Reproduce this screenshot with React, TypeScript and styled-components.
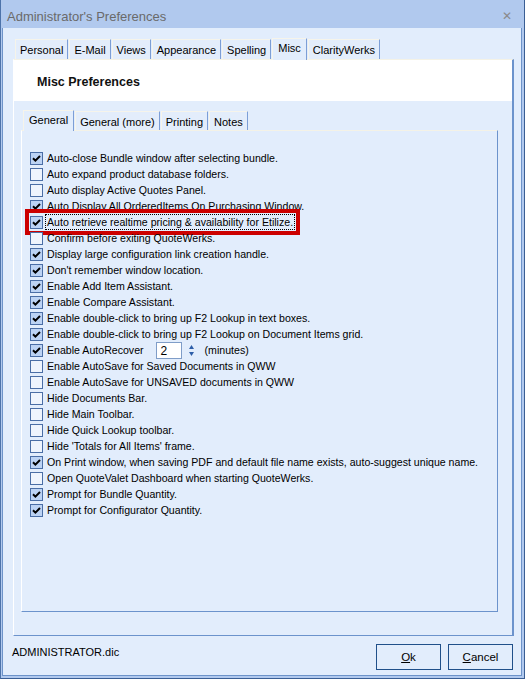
import React from 'react';
import styled, { createGlobalStyle } from 'styled-components';

/* ── Globals ── */

const GlobalStyle = createGlobalStyle`
  html, body {
    margin: 0;
    padding: 0;
    background: #e2edfc;
  }
  body {
    font-family: 'Liberation Sans', Arial, sans-serif;
  }
`;

/* ── Window frame ── */

const Window = styled.div`
  width: 525px;
  height: 679px;
  box-sizing: border-box;
  display: flex;
  flex-direction: column;
  background: #b1c9ee;
  border-left: 1px solid #4d73aa;
  border-right: 1px solid #3a5e94;
  border-bottom: 1px solid #3a5e94;
`;

const TitleBar = styled.div`
  height: 28px;
  flex: none;
  display: flex;
  align-items: center;
  justify-content: space-between;
  padding: 4px 12px 0 6px;
  box-sizing: border-box;
  font-size: 13px;
  color: #6a6a6a;
`;

const CloseGlyph = styled.span`
  font-family: 'DejaVu Sans', sans-serif;
  font-weight: bold;
  font-size: 12px;
  color: #8a8a8a;
`;

const Client = styled.div`
  flex: 1;
  display: flex;
  flex-direction: column;
  margin: 0 2px 2px 1px;
  padding: 9px 0 0 10px;
  background: #e2edfc;
  border-left: 1px solid #6d93c9;
  border-right: 1px solid #6d93c9;
  border-bottom: 1px solid #6d93c9;
  min-height: 0;
`;

/* ── Tabs ── */

const TabStrip = styled.div<{ $height: number }>`
  display: flex;
  align-items: flex-end;
  gap: 1px;
  height: ${p => p.$height}px;
  padding-left: 2px;
  flex: none;
  position: relative;
  z-index: 1;
`;

const Tab = styled.div<{ $active?: boolean; $h: number }>`
  box-sizing: border-box;
  height: ${p => (p.$active ? p.$h + 2 : p.$h)}px;
  padding: ${p => (p.$active ? '3px 5px 0' : '1px 4px 0')};
  font-size: 11px;
  color: #000;
  background: ${p => (p.$active ? '#e2edfc' : '#e3edfb')};
  border-top: 1px solid #f6f4ea;
  border-left: 1px solid #f6f4ea;
  border-right: 1px solid #7c9ed6;
  margin-bottom: ${p => (p.$active ? '-1px' : '0')};
  white-space: nowrap;
  display: flex;
  align-items: ${p => (p.$active ? 'flex-start' : 'center')};
`;

const Panel = styled.div`
  flex: 1;
  display: flex;
  flex-direction: column;
  margin-right: 7px;
  border-top: 1px solid #f4f2e6;
  border-left: 1px solid #ffffff;
  border-right: 2px solid #6c93cc;
  border-bottom: 1px solid #6c93cc;
  min-height: 0;
`;

const PanelHeader = styled.div`
  height: 41px;
  flex: none;
  background: #ffffff;
  display: flex;
  align-items: center;
  padding: 3px 0 0 23px;
  box-sizing: border-box;
  font-size: 12.5px;
  font-weight: bold;
  color: #111;
`;

const InnerArea = styled.div`
  flex: 1;
  display: flex;
  flex-direction: column;
  padding: 8px 14px 23px 7px;
  min-height: 0;
`;

const InnerPanel = styled.div`
  flex: 1;
  border-top: 1px solid #f4f2e6;
  border-left: 1px solid #ffffff;
  border-right: 1px solid #6c93cc;
  border-bottom: 1px solid #6c93cc;
  padding: 19px 0 0 8px;
  display: flex;
  flex-direction: column;
`;

/* ── Option rows ── */

const Row = styled.label<{ $highlight?: boolean }>`
  display: flex;
  align-items: center;
  align-self: flex-start;
  height: 16px;
  font-size: 10.6px;
  color: #000;
  white-space: nowrap;
  outline: ${p => (p.$highlight ? '4px solid #cc0000' : 'none')};
  outline-offset: 1px;
`;

const Box = styled.span<{ $checked: boolean }>`
  width: 13px;
  height: 13px;
  box-sizing: border-box;
  flex: none;
  border: 1px solid #4a6ea6;
  background: ${p => (p.$checked ? '#bcd3f4' : '#eef4fd')};
  display: flex;
  align-items: center;
  justify-content: center;
  margin-right: 2px;
`;

const Label = styled.span<{ $focus?: boolean }>`
  padding: 0 1px;
  line-height: 14px;
  border: 1px dotted ${p => (p.$focus ? '#000' : 'transparent')};
`;

const NumberBox = styled.span`
  width: 26px;
  height: 17px;
  box-sizing: border-box;
  background: #fff;
  border: 1px solid #7f9dc8;
  font-size: 12px;
  padding: 1px 0 0 4px;
  margin-left: 10px;
`;

const Spin = styled.span`
  display: flex;
  flex-direction: column;
  gap: 3px;
  margin-left: 7px;
  margin-right: 11px;
`;

const Unit = styled.span`
  font-size: 10.6px;
`;

/* ── Footer ── */

const Footer = styled.div`
  height: 39px;
  flex: none;
  display: flex;
  align-items: flex-start;
  justify-content: space-between;
  padding: 8px 8px 0 0;
  box-sizing: border-box;
`;

const Status = styled.span`
  font-size: 11px;
  color: #000;
  margin: 2px 0 0 -1px;
`;

const Buttons = styled.div`
  display: flex;
  gap: 7px;
`;

const Button = styled.button`
  width: 65px;
  height: 26px;
  box-sizing: border-box;
  border: 1px solid #20508a;
  background: #e2edfc;
  font-family: 'Liberation Sans', Arial, sans-serif;
  font-size: 11.5px;
  color: #000;
  padding: 0;
  border-radius: 0;

  u { text-decoration: underline; }
`;

/* ── Data ── */

type Opt = { text: string; checked: boolean; highlight?: boolean; spinner?: boolean };

const OPTIONS: Opt[] = [
  { text: 'Auto-close Bundle window after selecting bundle.', checked: true },
  { text: 'Auto expand product database folders.', checked: false },
  { text: 'Auto display Active Quotes Panel.', checked: false },
  { text: 'Auto Display All OrderedItems On Purchasing Window.', checked: true },
  { text: 'Auto retrieve realtime pricing & availability for Etilize.', checked: true, highlight: true },
  { text: 'Confirm before exiting QuoteWerks.', checked: false },
  { text: 'Display large configuration link creation handle.', checked: true },
  { text: "Don't remember window location.", checked: true },
  { text: 'Enable Add Item Assistant.', checked: true },
  { text: 'Enable Compare Assistant.', checked: true },
  { text: 'Enable double-click to bring up F2 Lookup in text boxes.', checked: true },
  { text: 'Enable double-click to bring up F2 Lookup on Document Items grid.', checked: true },
  { text: 'Enable AutoRecover', checked: true, spinner: true },
  { text: 'Enable AutoSave for Saved Documents in QWW', checked: false },
  { text: 'Enable AutoSave for UNSAVED documents in QWW', checked: false },
  { text: 'Hide Documents Bar.', checked: false },
  { text: 'Hide Main Toolbar.', checked: false },
  { text: 'Hide Quick Lookup toolbar.', checked: false },
  { text: "Hide 'Totals for All Items' frame.", checked: false },
  { text: 'On Print window, when saving PDF and default file name exists, auto-suggest unique name.', checked: true },
  { text: 'Open QuoteValet Dashboard when starting QuoteWerks.', checked: false },
  { text: 'Prompt for Bundle Quantity.', checked: true },
  { text: 'Prompt for Configurator Quantity.', checked: true },
];

const OUTER_TABS = ['Personal', 'E-Mail', 'Views', 'Appearance', 'Spelling', 'Misc', 'ClarityWerks'];
const INNER_TABS = ['General', 'General (more)', 'Printing', 'Notes'];

/* ── Bits ── */

const Check = () => (
  <svg width="9" height="9" viewBox="0 0 9 9">
    <path d="M1 4.2 L3.4 6.6 L8 2" fill="none" stroke="#000" strokeWidth="2" />
  </svg>
);

const Arrow = ({ up }: { up?: boolean }) => (
  <svg width="5" height="4" viewBox="0 0 5 4">
    <path d={up ? 'M0 4 L2.5 0 L5 4 Z' : 'M0 0 L5 0 L2.5 4 Z'} fill="#2d5ea8" />
  </svg>
);

/* ── App ── */

export default function App() {
  return (
    <>
      <GlobalStyle />
      <Window>
        <TitleBar>
          <span>Administrator's Preferences</span>
          <CloseGlyph>✕</CloseGlyph>
        </TitleBar>
        <Client>
          <TabStrip $height={22}>
            {OUTER_TABS.map(t => (
              <Tab key={t} $h={20} $active={t === 'Misc'}>{t}</Tab>
            ))}
          </TabStrip>
          <Panel>
            <PanelHeader>Misc Preferences</PanelHeader>
            <InnerArea>
              <TabStrip $height={21}>
                {INNER_TABS.map(t => (
                  <Tab key={t} $h={19} $active={t === 'General'}>{t}</Tab>
                ))}
              </TabStrip>
              <InnerPanel>
                {OPTIONS.map(o => (
                  <Row key={o.text} $highlight={o.highlight}>
                    <Box $checked={o.checked}>{o.checked && <Check />}</Box>
                    <Label $focus={o.highlight}>{o.text}</Label>
                    {o.spinner && (
                      <>
                        <NumberBox>2</NumberBox>
                        <Spin>
                          <Arrow up />
                          <Arrow />
                        </Spin>
                        <Unit>(minutes)</Unit>
                      </>
                    )}
                  </Row>
                ))}
              </InnerPanel>
            </InnerArea>
          </Panel>
          <Footer>
            <Status>ADMINISTRATOR.dic</Status>
            <Buttons>
              <Button><u>O</u>k</Button>
              <Button><u>C</u>ancel</Button>
            </Buttons>
          </Footer>
        </Client>
      </Window>
    </>
  );
}
